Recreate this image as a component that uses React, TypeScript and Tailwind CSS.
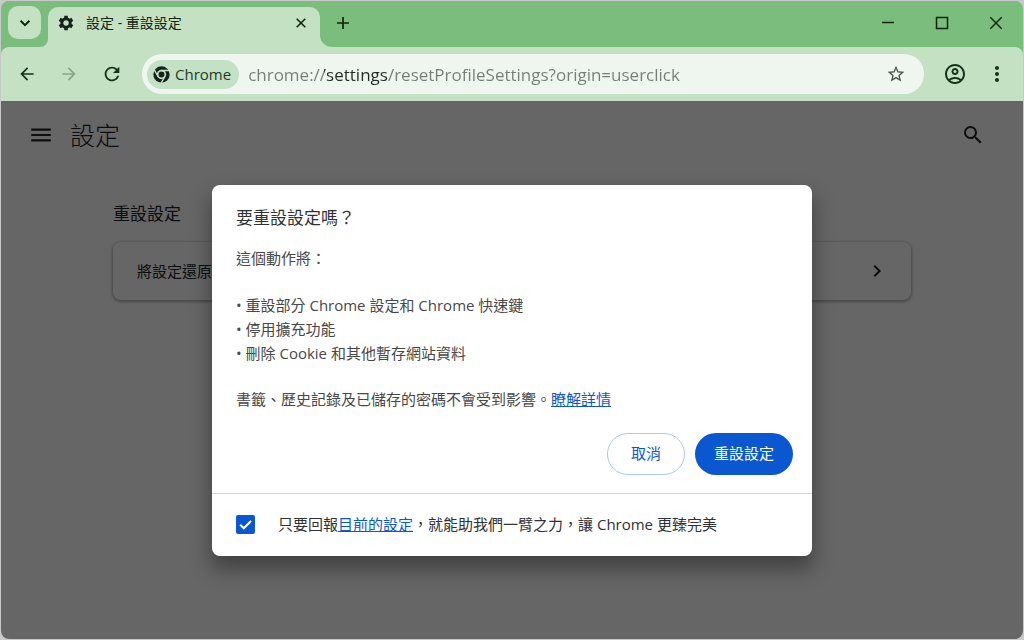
import React, { useState } from "react";
import {
  MdArrowBack,
  MdArrowForward,
  MdChevronRight,
  MdMenu,
  MdMoreVert,
  MdOutlineAccountCircle,
  MdRefresh,
  MdSearch,
  MdStarBorder,
} from "react-icons/md";

type IconProps = { className?: string };

function ChromeMark({ className }: IconProps) {
  return (
    <svg viewBox="0 0 24 24" className={className} aria-hidden="true">
      <circle cx="12" cy="12" r="11.5" fill="#16231a" />
      <circle cx="12" cy="12" r="6.6" fill="#c5e1c5" />
      <circle cx="12" cy="12" r="4.2" fill="#16231a" />
      <g stroke="#c5e1c5" strokeWidth="2" fill="none">
        <path d="M12 6.4H23.5" />
        <path d="M7.15 14.8 1.4 4.84" />
        <path d="M16.85 14.8 11.1 24.76" />
      </g>
    </svg>
  );
}

function Gear({ className }: IconProps) {
  return (
    <svg viewBox="0 0 24 24" className={className} fill="none" stroke="currentColor" aria-hidden="true">
      <circle cx="12" cy="12" r="6.3" strokeWidth="4.4" />
      <path
        strokeWidth="5.4"
        d="M12 5V1M12 19v4M5.94 8.5 2.47 6.5M18.06 8.5l3.47-2M5.94 15.5l-3.47 2M18.06 15.5l3.47 2"
      />
    </svg>
  );
}

function Stroke({ d, className, width = 1.5 }: { d: string; className?: string; width?: number }) {
  return (
    <svg viewBox="0 0 16 16" className={className} fill="none" stroke="currentColor" strokeWidth={width} aria-hidden="true">
      <path d={d} />
    </svg>
  );
}

function TabStrip() {
  return (
    <div className="flex h-[46px] items-end border-t border-[#86b687] bg-[#7bbd7c] text-[#10240f]">
      <button
        type="button"
        aria-label="搜尋分頁"
        className="mr-[7px] mb-2 ml-[7px] flex size-[33px] items-center justify-center rounded-[10px] bg-[#c5e1c4]"
      >
        <Stroke d="M3.6 5.8 8 10.2l4.4-4.4" className="size-4" width={2} />
      </button>
      <div className="relative flex h-10 w-[272px] items-center rounded-t-[10px] bg-[#c5e1c4] pr-[11px] pl-[10px]">
        <span className="absolute bottom-0 -left-2 size-2 bg-[#c5e1c4]">
          <span className="block size-2 rounded-br-full bg-[#7bbd7c]" />
        </span>
        <span className="absolute -right-3 bottom-0 size-3 bg-[#c5e1c4]">
          <span className="block size-3 rounded-bl-full bg-[#7bbd7c]" />
        </span>
        <Gear className="mb-2 size-4 text-[#16231a]" />
        <span className="mb-2 ml-3 flex-1 truncate text-[14px] leading-5">設定 - 重設設定</span>
        <button type="button" aria-label="關閉分頁" className="mb-2 flex size-4 items-center justify-center">
          <Stroke d="M3.7 3.7l8.6 8.6M12.3 3.7l-8.6 8.6" className="size-4" width={1.6} />
        </button>
      </div>
      <button type="button" aria-label="新分頁" className="mb-4 ml-[15px] flex size-4 items-center justify-center">
        <Stroke d="M8 2v12M2 8h12" className="size-4" width={1.7} />
      </button>
      <div className="mr-[19px] mb-4 ml-auto flex gap-[38px]">
        <button type="button" aria-label="最小化">
          <Stroke d="M2 7.5h12" className="size-4" />
        </button>
        <button type="button" aria-label="最大化">
          <Stroke d="M2.5 2.5h11v11h-11z" className="size-4" />
        </button>
        <button type="button" aria-label="關閉">
          <Stroke d="M2.3 2.3l11.4 11.4M13.7 2.3 2.3 13.7" className="size-4" width={1.4} />
        </button>
      </div>
    </div>
  );
}

function Toolbar() {
  const [url, setUrl] = useState("chrome://settings/resetProfileSettings?origin=userclick");
  return (
    <div className="bg-[#7bbd7c]">
      <div className="flex h-[54px] items-center rounded-t-lg bg-[#c5e1c4] pr-[14px] pl-4 text-[#16331a]">
        <button type="button" aria-label="上一頁">
          <MdArrowBack className="size-5" />
        </button>
        <button type="button" aria-label="下一頁" className="ml-[22px] text-[#8ba68b]">
          <MdArrowForward className="size-5" />
        </button>
        <button type="button" aria-label="重新載入" className="ml-[22px]">
          <MdRefresh className="size-[22px]" />
        </button>
        <div className="ml-[19px] flex h-10 flex-1 items-center rounded-full bg-[#eff6f0] pr-[18px] pl-[5px]">
          <button
            type="button"
            className="flex h-[29px] items-center gap-[5px] rounded-full bg-[#c5e1c5] pr-2 pl-[6px] text-[15px] text-[#1f3a24]"
          >
            <ChromeMark className="size-[17px]" />
            Chrome
          </button>
          <input
            type="text"
            aria-label="網址"
            value={url}
            onChange={(e) => setUrl(e.target.value)}
            className="ml-[9px] h-8 min-w-0 flex-1 bg-[linear-gradient(90deg,#757d77_76px,#1f2a22_76px,#1f2a22_140px,#757d77_140px)] bg-clip-text text-[17px] text-transparent caret-black outline-none"
          />
          <button type="button" aria-label="將這個分頁加入書籤" className="text-[#4a524c]">
            <MdStarBorder className="size-5" />
          </button>
        </div>
        <button type="button" aria-label="使用者設定檔" className="ml-[19px]">
          <MdOutlineAccountCircle className="size-6" />
        </button>
        <button type="button" aria-label="選單" className="ml-[18px]">
          <MdMoreVert className="size-6" />
        </button>
      </div>
    </div>
  );
}

function SettingsPage() {
  return (
    <div>
      <header className="flex h-[68px] items-center pr-[38px] pl-[27px] text-[#202124]">
        <button type="button" aria-label="主選單">
          <MdMenu className="size-[26px]" />
        </button>
        <h1 className="ml-4 flex-1 text-[25px] leading-9 font-light">設定</h1>
        <button type="button" aria-label="搜尋設定">
          <MdSearch className="size-6" />
        </button>
      </header>
      <section className="mx-auto mt-[33px] max-w-[798px] text-[#202124]">
        <h2 className="text-[17px] leading-6">重設設定</h2>
        <button
          type="button"
          className="mt-4 flex h-[58px] w-full items-center justify-between rounded-lg bg-white pr-[22px] pl-6 text-[15px] shadow-[0_1px_3px_1px_rgba(0,0,0,0.3)]"
        >
          將設定還原
          <MdChevronRight className="size-6" />
        </button>
      </section>
    </div>
  );
}

function ResetDialog() {
  const [report, setReport] = useState(true);
  return (
    <div
      role="dialog"
      aria-modal="true"
      aria-labelledby="reset-title"
      className="w-[600px] max-w-full rounded-lg bg-white text-[15px] text-[#474747] shadow-[0_12px_20px_2px_rgba(0,0,0,0.35)]"
    >
      <div className="px-6 pt-[21px]">
        <h2 id="reset-title" className="text-[17px] leading-6 text-[#303134]">
          要重設設定嗎？
        </h2>
        <p className="mt-4 leading-6">這個動作將：</p>
        <ul className="mt-[23px] leading-6">
          <li>• 重設部分 Chrome 設定和 Chrome 快速鍵</li>
          <li>• 停用擴充功能</li>
          <li>• 刪除 Cookie 和其他暫存網站資料</li>
        </ul>
        <p className="mt-[22px] leading-6">
          書籤、歷史記錄及已儲存的密碼不會受到影響。
          <a href="#learn-more" className="text-[#0b57d0] underline">
            瞭解詳情
          </a>
        </p>
      </div>
      <div className="mt-[22px] flex justify-end gap-[10px] pr-[19px] pb-[18px]">
        <button type="button" className="h-[42px] rounded-full border border-[#a8c7fa] px-[23px] text-[#0b57d0]">
          取消
        </button>
        <button type="button" className="h-[42px] rounded-full bg-[#0b57d0] px-[19px] text-white">
          重設設定
        </button>
      </div>
      <div className="flex h-[63px] items-center border-t border-[#d4d4d4] px-6">
        <span className="relative flex size-[19px]">
          <input
            id="report"
            type="checkbox"
            checked={report}
            onChange={(e) => setReport(e.target.checked)}
            className="peer size-[19px] appearance-none rounded-xs border-2 border-[#0b57d0] checked:bg-[#0b57d0]"
          />
          <svg
            viewBox="0 0 19 19"
            className="pointer-events-none absolute inset-0 hidden peer-checked:block"
            fill="none"
            stroke="white"
            strokeWidth="2"
            aria-hidden="true"
          >
            <path d="M4.2 9.8 7.8 13.3 15 6" />
          </svg>
        </span>
        <label htmlFor="report" className="ml-[23px] text-[#303134]">
          只要回報
          <a href="#current-settings" className="text-[#0b57d0] underline">
            目前的設定
          </a>
          ，就能助我們一臂之力，讓 Chrome 更臻完美
        </label>
      </div>
    </div>
  );
}

export default function App() {
  return (
    <div className="flex min-h-screen bg-[#c9c9cc] p-px font-['Open_Sans','Noto_Sans_CJK_TC',sans-serif]">
      <div className="flex flex-1 flex-col overflow-hidden rounded-lg">
        <TabStrip />
        <Toolbar />
        <main className="relative flex-1 bg-white">
          <SettingsPage />
          <div className="absolute inset-0 flex items-center justify-center bg-black/60">
            <ResetDialog />
          </div>
        </main>
      </div>
    </div>
  );
}
